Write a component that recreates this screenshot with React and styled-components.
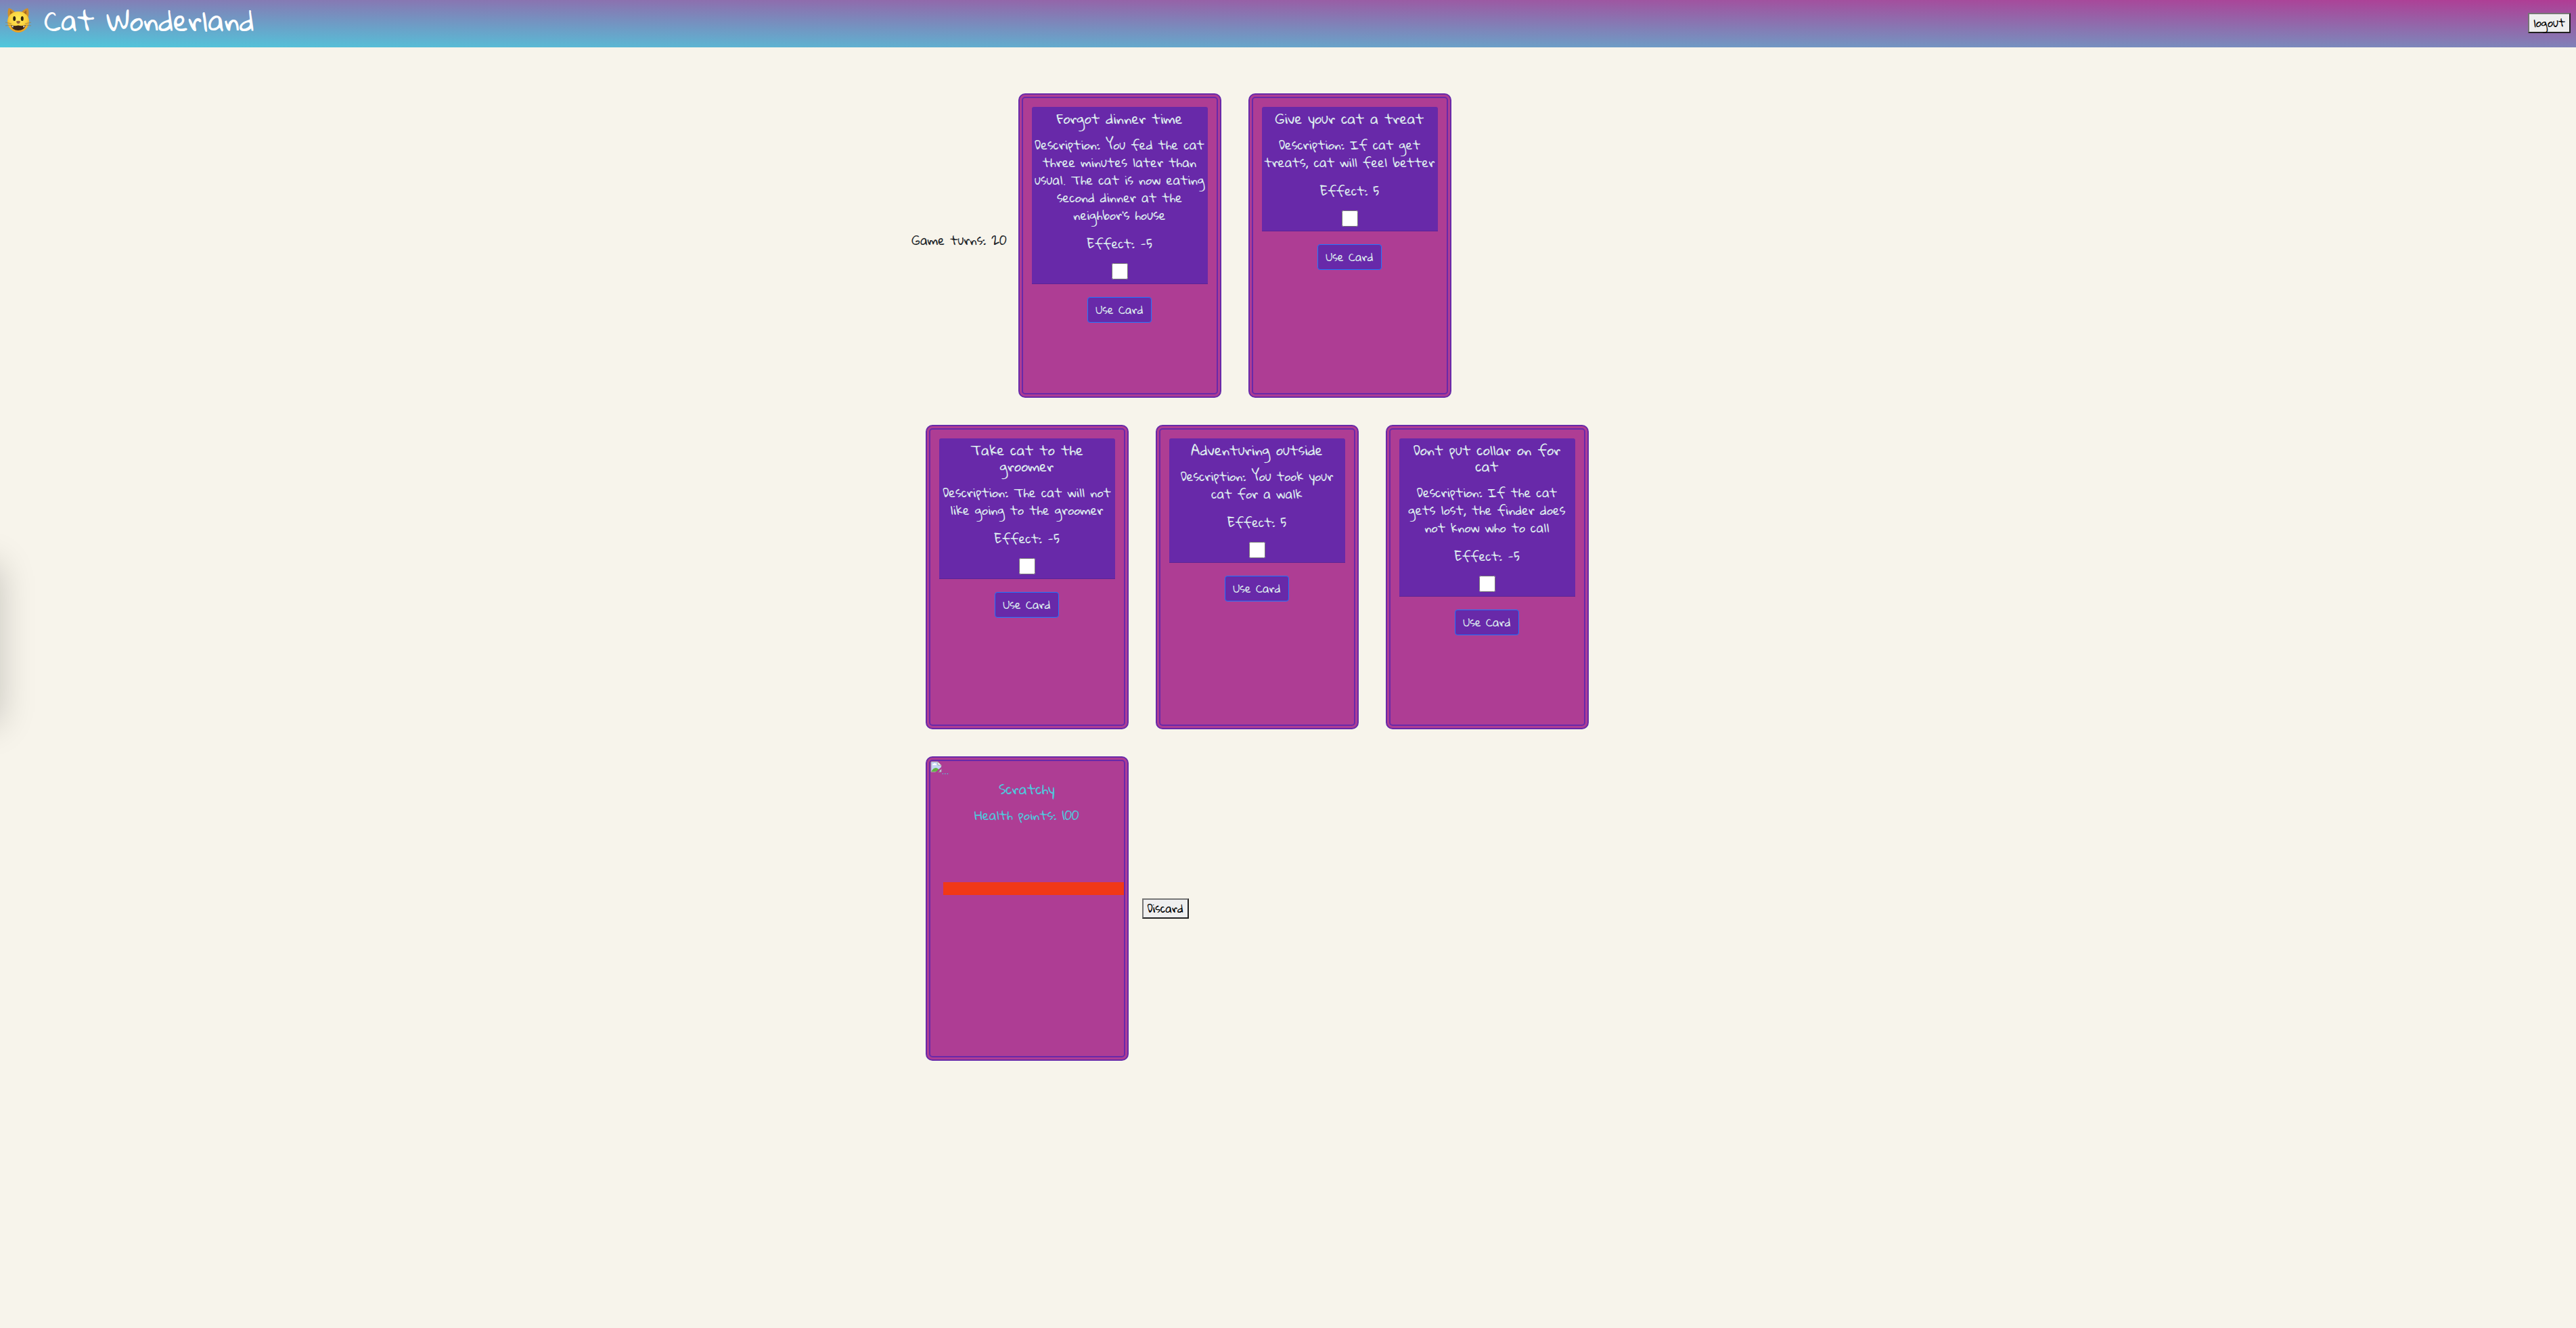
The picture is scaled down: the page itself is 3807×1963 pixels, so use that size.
import React from 'react';
import styled, { createGlobalStyle } from 'styled-components';

const purple = '#6829a9';
const magenta = '#ae3d94';
const cyan = '#50c8dc';
const pale = '#dcebee';

const GlobalStyle = createGlobalStyle`
  *, *::before, *::after {
    box-sizing: border-box;
  }

  body {
    margin: 0;
    min-height: 100vh;
    overflow-x: hidden;
    background: #f7f4eb;
    color: #212529;
    font-family: 'Gloria Hallelujah', 'Open Sans', sans-serif;
    font-size: 18px;
    line-height: 26px;
  }

  button {
    font-family: inherit;
  }
`;

const Header = styled.header`
  display: flex;
  align-items: center;
  justify-content: space-between;
  height: 70px;
  padding: 0 8px 2px;
  background: linear-gradient(to top right, ${cyan}, #b03c94);
`;

const Brand = styled.div`
  display: flex;
  align-items: center;
  gap: 19px;
  padding-bottom: 8px;
`;

const CatIcon = styled.svg`
  width: 38px;
  height: 38px;
`;

const SiteTitle = styled.h1`
  margin: 0;
  color: #fff;
  font-size: 40px;
  font-weight: 400;
  line-height: 48px;
`;

const PlainButton = styled.button`
  padding: 1px 6px;
  border: 2px solid;
  border-color: #767676 #212121 #212121 #767676;
  background: #efefef;
  color: #000;
  font-size: 16px;
  line-height: 24px;
`;

const SidePanel = styled.aside`
  position: fixed;
  top: 834px;
  left: -240px;
  width: 240px;
  height: 236px;
  box-shadow: 0 0 50px rgba(0, 0, 0, 0.2);
`;

const Board = styled.main`
  display: flex;
  flex-wrap: wrap;
  align-items: center;
  width: 100%;
  max-width: 1112px;
  margin: 48px auto 0;
`;

const Turns = styled.p`
  flex: 0 0 137px;
  min-width: 0;
  margin: 0 0 16px;
  white-space: nowrap;
`;

const CardFrame = styled.article`
  width: 300px;
  height: 450px;
  margin: 20px;
  padding: ${(p) => (p.$flush ? '0' : '13px')};
  overflow: hidden;
  border: 7px double ${purple};
  border-radius: 10px;
  background: ${magenta};
  text-align: center;
`;

const CardInfo = styled.div`
  padding: 5px 4px 6px;
  border-bottom: 1px solid #5a2496;
  border-radius: 3px 3px 0 0;
  background: ${purple};
  color: ${pale};
`;

const CardTitle = styled.h2`
  margin: 0 0 14px;
  font-size: 20px;
  font-weight: 400;
  line-height: 24px;
`;

const CardText = styled.p`
  margin: 0 0 16px;
`;

const Tick = styled.input`
  display: block;
  width: 24px;
  height: 24px;
  margin: 0 auto;
`;

const UseButton = styled.button`
  margin-top: 19px;
  padding: 6px 12px;
  border: 1px solid #1f78ff;
  border-radius: 4px;
  background: ${purple};
  color: ${pale};
  font-size: 16px;
  line-height: 24px;
`;

const CatRow = styled.section`
  display: flex;
  align-items: center;
`;

const MissingPhoto = styled.div`
  display: flex;
  height: 29px;
  color: ${cyan};
  font-size: 16px;
  line-height: 26px;

  svg {
    width: 17px;
    height: 17px;
  }
`;

const CatBody = styled.div`
  color: ${cyan};
`;

const HealthBar = styled.div`
  width: ${(p) => p.$points * 3}px;
  height: 19px;
  margin: 86px 0 0 19px;
  background: #f13817;
`;

const actionCards = [
  {
    title: 'Forgot dinner time',
    description:
      'You fed the cat three minutes later than usual. The cat is now eating second dinner at the neighbor\'s house',
    effect: -5,
  },
  { title: 'Give your cat a treat', description: 'If cat get treats, cat will feel better', effect: 5 },
  { title: 'Take cat to the groomer', description: 'The cat will not like going to the groomer', effect: -5 },
  { title: 'Adventuring outside', description: 'You took your cat for a walk', effect: 5 },
  {
    title: 'Dont put collar on for cat',
    description: 'If the cat gets lost, the finder does not know who to call',
    effect: -5,
  },
];

function SmilingCat() {
  return (
    <CatIcon viewBox="0 0 38 38" role="img" aria-label="Smiling cat">
      <defs>
        <radialGradient id="fur" cx="0.5" cy="0.35" r="0.65">
          <stop offset="0" stopColor="#fdec5c" />
          <stop offset="0.6" stopColor="#fad03c" />
          <stop offset="1" stopColor="#e99a1c" />
        </radialGradient>
      </defs>
      <path d="M5 1C9 2 13 5 15 8L5 17C3 11 3 5 5 1Z" fill="#cf8f2a" />
      <path d="M33 1C29 2 25 5 23 8L33 17C35 11 35 5 33 1Z" fill="#cf8f2a" />
      <path d="M7 4L12 9L7 14Z" fill="#a8691f" />
      <path d="M31 4L26 9L31 14Z" fill="#a8691f" />
      <path d="M19 6C29 6 35 13 35 21C35 30 27 37 19 37C11 37 3 30 3 21C3 13 9 6 19 6Z" fill="url(#fur)" />
      <ellipse cx="13.2" cy="16.5" rx="2" ry="3.6" fill="#33260f" />
      <ellipse cx="24.8" cy="16.5" rx="2" ry="3.6" fill="#33260f" />
      <path d="M16 20.5Q19 19 22 20.5Q21.5 24 19 24Q16.5 24 16 20.5Z" fill="#96603a" />
      <path d="M8 26Q13 28 19 26.5Q25 28 30 26Q28 34 19 34Q10 34 8 26Z" fill="#3a2416" />
      <path d="M9 27L12 27.6L11 30ZM29 27L26 27.6L27 30Z" fill="#fff" />
      <path d="M0 22L9 24M0 27L8 26M38 22L29 24M38 27L30 26" stroke="#9a8450" strokeWidth="0.8" fill="none" />
    </CatIcon>
  );
}

function BrokenImage() {
  return (
    <svg viewBox="0 0 17 17" aria-hidden="true">
      <path d="M1 1H11L16 6V16H1Z" fill="#c5d5f5" />
      <path d="M3 6Q3 4 5 4Q6 2 8 4Q9 4 9 6Z" fill="#fff" />
      <path d="M1 16Q4 10 8 10Q12 10 14 16Z" fill="#63b244" />
      <path d="M1 1H11M1 1V16M1 16H16M16 11V16M16 6V8" stroke="#a5a5a5" strokeWidth="1" fill="none" />
      <path d="M11 1V6H16Z" fill="#fff" stroke="#a5a5a5" strokeWidth="1" />
      <path d="M7 17L17 8V11L11 17Z" fill={magenta} />
    </svg>
  );
}

function ActionCard({ title, description, effect }) {
  return (
    <CardFrame>
      <CardInfo>
        <CardTitle>{title}</CardTitle>
        <CardText>Description: {description}</CardText>
        <CardText>Effect: {effect}</CardText>
        <Tick type="checkbox" aria-label={title} />
      </CardInfo>
      <UseButton type="button">Use Card</UseButton>
    </CardFrame>
  );
}

export default function App() {
  return (
    <>
      <GlobalStyle />
      <Header>
        <Brand>
          <SmilingCat />
          <SiteTitle>Cat Wonderland</SiteTitle>
        </Brand>
        <PlainButton type="button">logout</PlainButton>
      </Header>
      <SidePanel />
      <Board>
        <Turns>Game turns: 20</Turns>
        {actionCards.map((card) => (
          <ActionCard key={card.title} {...card} />
        ))}
        <CatRow>
          <CardFrame $flush>
            <MissingPhoto>
              <BrokenImage />
              <span>...</span>
            </MissingPhoto>
            <CatBody>
              <CardTitle>Scratchy</CardTitle>
              <CardText>Health points: 100</CardText>
            </CatBody>
            <HealthBar $points={100} />
          </CardFrame>
          <PlainButton type="button">Discard</PlainButton>
        </CatRow>
      </Board>
    </>
  );
}
